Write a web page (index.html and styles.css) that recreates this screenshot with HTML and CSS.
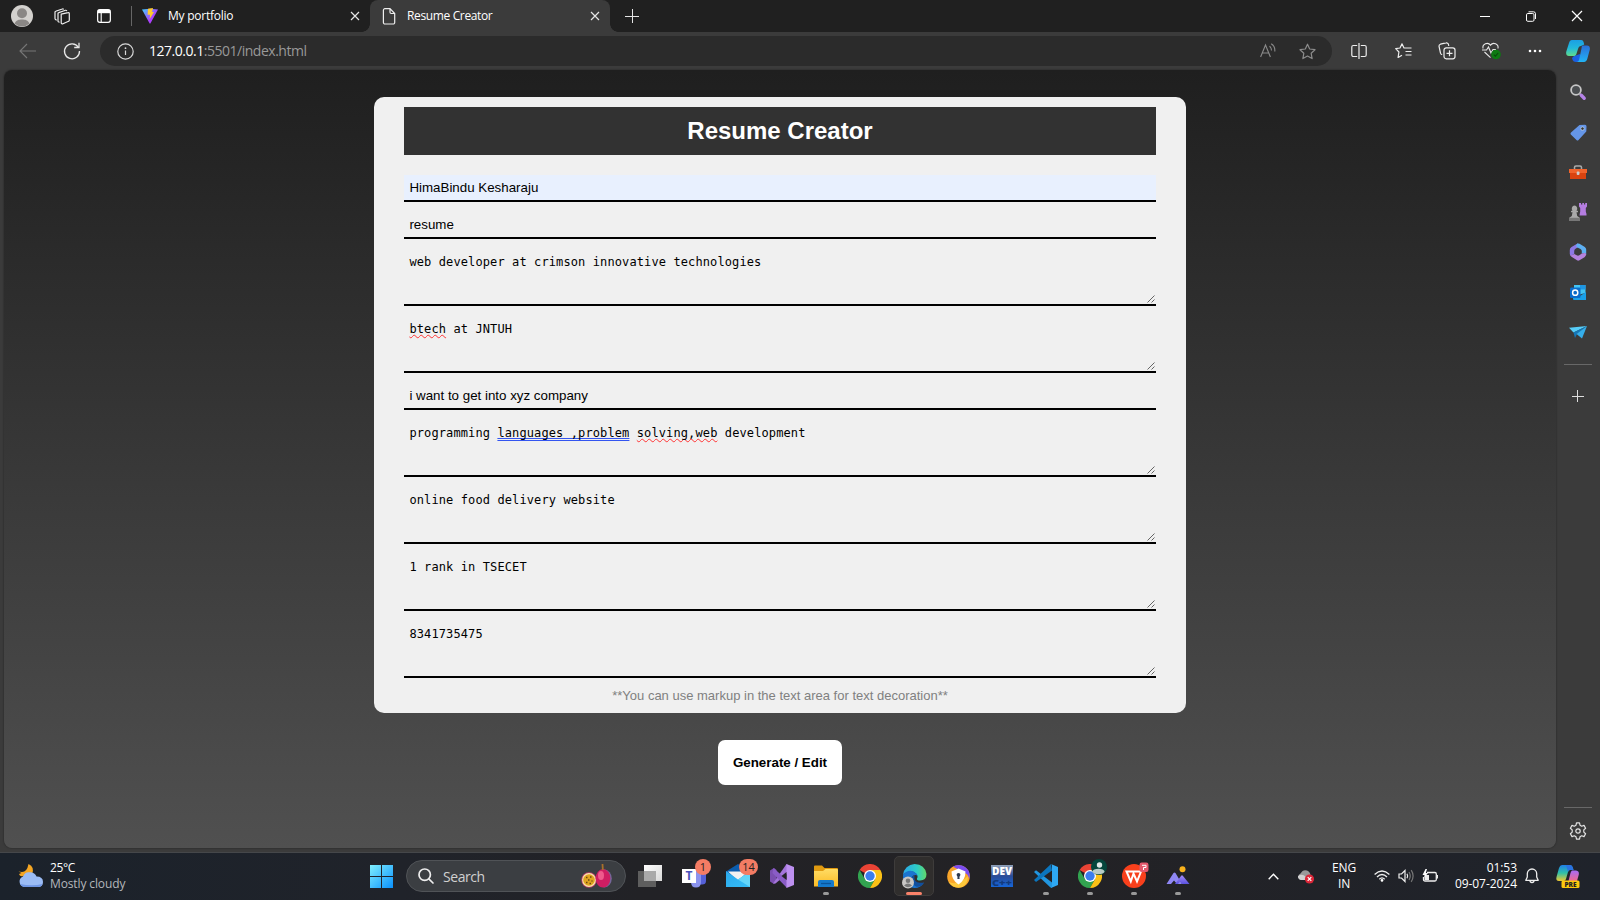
FILE: index.html
```html
<!DOCTYPE html>
<html lang="en">
<head>
<meta charset="utf-8">
<title>Resume Creator</title>
<link rel="stylesheet" href="styles.css">
</head>
<body>
<svg class="defs" width="0" height="0" aria-hidden="true">
  <defs>
    <linearGradient id="gCopA" x1="0" y1="0" x2="0" y2="1"><stop offset="0" stop-color="#1b9fe4"/><stop offset=".5" stop-color="#22b8dc"/><stop offset="1" stop-color="#5fdc8a"/></linearGradient>
    <linearGradient id="gCopB" x1="0" y1="0" x2="0" y2="1"><stop offset="0" stop-color="#2a6fd8"/><stop offset="1" stop-color="#22b4f4"/></linearGradient>
    <linearGradient id="gWin" x1="0" y1="0" x2="1" y2="1"><stop offset="0" stop-color="#80f0ff"/><stop offset="1" stop-color="#0a90fb"/></linearGradient>
    <linearGradient id="gVite" x1="0" y1="0" x2="1" y2="1"><stop offset="0" stop-color="#41d1ff"/><stop offset=".6" stop-color="#a844fe"/><stop offset="1" stop-color="#bd34fe"/></linearGradient>
    <linearGradient id="gEdge" x1="0" y1="0" x2="1" y2="0"><stop offset="0" stop-color="#2aa6e8"/><stop offset=".6" stop-color="#2ecdc4"/><stop offset="1" stop-color="#62d96a"/></linearGradient>
    <linearGradient id="gMail" x1="0" y1="0" x2="1" y2="1"><stop offset="0" stop-color="#2ba8ec"/><stop offset="1" stop-color="#35bdf5"/></linearGradient>
    <linearGradient id="gFolder" x1="0" y1="0" x2="0" y2="1"><stop offset="0" stop-color="#ffdc64"/><stop offset="1" stop-color="#fbbb25"/></linearGradient>
    <linearGradient id="gDev" x1="0" y1="0" x2="0" y2="1"><stop offset="0" stop-color="#8fa0b8"/><stop offset=".5" stop-color="#2b4c96"/><stop offset="1" stop-color="#1565d8"/></linearGradient>
    <linearGradient id="gMtn" x1="0" y1="0" x2="0" y2="1"><stop offset="0" stop-color="#a58af8"/><stop offset="1" stop-color="#5a52e0"/></linearGradient>
    <linearGradient id="gPre" x1="0" y1="0" x2="0" y2="1"><stop offset="0" stop-color="#1f7fe8"/><stop offset=".5" stop-color="#2fc0a8"/><stop offset="1" stop-color="#f0c830"/></linearGradient>
    <linearGradient id="gPreB" x1="0" y1="0" x2="0" y2="1"><stop offset="0" stop-color="#a66bf5"/><stop offset="1" stop-color="#f2688c"/></linearGradient>
    <linearGradient id="gTask" x1="0" y1="0" x2="1" y2="1"><stop offset="0" stop-color="#fff"/><stop offset="1" stop-color="#d8d8d8"/></linearGradient>
    <symbol id="chrome" viewBox="0 0 24 24">
      <path d="M12 12 1.600 6A12 12 0 0 1 22.400 6Z" fill="#e94335"/>
      <path d="M1.600 6A12 12 0 0 0 12 24L17.200 15 12 12 6.800 15Z" fill="#32a350"/>
      <path d="M12 6H22.400A12 12 0 0 1 12 24L17.200 15Z" fill="#fbc116"/>
      <circle cx="12" cy="12" r="6" fill="#fff"/><circle cx="12" cy="12" r="4.700" fill="#3b7ded"/>
    </symbol>
    <symbol id="close" viewBox="0 0 10 10"><path d="M1 1 9 9M9 1 1 9" stroke="#e6e6e6" stroke-width="1.200" fill="none"/></symbol>
    <symbol id="copilot" viewBox="0 0 24 22">
      <path d="M8 16 6 18C6.600 21 8 22 10 22H17L14 14Z" fill="#1b5fe0"/>
      <path d="M6 0H15C17 0 17.600 1.400 18.200 4.600L15 6C13.400 6 12.600 7 12 9L10.400 14C9.800 15.600 9 16 7.400 16H3C.6 16-.3 14 .3 11.600L3 3C3.600 1 4.400 0 6 0Z" fill="url(#gCopA)"/>
      <path d="M16.600 5.600H21C23.400 5.600 24.300 7.600 23.700 10L21.400 18.600C20.800 21 19.800 22 18 22H10.400C12 22 12.800 21 13.200 19.200L15.400 9C15.800 7.200 15.600 6 16.600 5.600Z" fill="url(#gCopB)"/>
    </symbol>
    <symbol id="grip" viewBox="0 0 8 8"><path d="M.5 7.500 7.500 .5M4.500 7.500 7.500 4.500" stroke="#555" stroke-width=".9" fill="none"/></symbol>
  </defs>
</svg>

<header class="tabs">
  <span class="cell avatar"><svg width="22" height="22" viewBox="0 0 22 22"><circle cx="11" cy="11" r="11" fill="#d3d1ce"/><circle cx="11" cy="8.300" r="5" fill="#8a8785"/><path d="M3.500 18.500C5 15 8 14.400 11 14.400S17 15 18.500 18.500A11 11 0 0 1 3.500 18.500Z" fill="#8a8785"/></svg></span>
  <span class="cell spaces"><svg width="17" height="17" viewBox="0 0 17 17" fill="none" stroke="#eee" stroke-width="1.200"><path d="M7.200 6.200 14 4.600a1 1 0 0 1 1.300 1V12.300a1 1 0 0 1-.8 1L9 15.800a1.200 1.200 0 0 1-1.800-1Z"/><path d="M5.600 14.300 4.700 14A1 1 0 0 1 4 13V5.600a1 1 0 0 1 .8-1L11.500 2.300a1 1 0 0 1 1.300.8"/><path d="M2.700 12.200 1.500 11.500A1 1 0 0 1 1 10.600V4.300a1 1 0 0 1 .7-1L8.300 1a1 1 0 0 1 1.300.5"/></svg></span>
  <span class="cell actions"><svg width="14" height="14" viewBox="0 0 15 15"><rect x=".7" y=".7" width="13.600" height="13.600" rx="2.400" fill="none" stroke="#fff" stroke-width="1.300"/><path d="M1 1H14V4.500H1Z" fill="#fff"/><path d="M4.500 4V14" stroke="#fff" stroke-width="1.200"/></svg></span>
  <i class="tab-rule"></i>
  <div class="tab">
    <svg width="16" height="16" viewBox="0 0 16 16"><path d="M0 1.600 8 .8 16 1.600 8.500 15.300Q8 16 7.500 15.300Z" fill="url(#gVite)"/><path d="M6 .8 11 0 10 4H12L7.700 11 8 6.800H5.600Z" fill="#ffc92e"/></svg>
    <span class="tab-name t1">My portfolio</span>
    <svg width="10" height="10"><use href="#close"/></svg>
  </div>
  <div class="tab active">
    <svg width="14" height="17" viewBox="0 0 14 17" fill="none" stroke="#eee" stroke-width="1.200"><path d="M3 .7H8L12.700 5.500V14.500A1.500 1.500 0 0 1 11.200 16H3A1.500 1.500 0 0 1 1.400 14.500V2.200A1.500 1.500 0 0 1 3 .7ZM8 .9V4.300A1.200 1.200 0 0 0 9.200 5.500H12.600"/></svg>
    <span class="tab-name t2">Resume Creator</span>
    <svg width="10" height="10"><use href="#close"/></svg>
  </div>
  <svg class="newtab" width="14" height="14" viewBox="0 0 14 14"><path d="M7.500 0V14M0 7.500H14" stroke="#e4e4e4"/></svg>
  <div class="winctl">
    <svg width="10" height="10" viewBox="0 0 10 10"><path d="M0 5.500H10" stroke="#fff"/></svg>
    <svg width="10" height="11" viewBox="0 0 10 11" fill="none" stroke="#fff"><rect x=".5" y="2.500" width="7.500" height="7.800" rx="1.300"/><path d="M2.500 .8H7.500A2 2 0 0 1 9.500 2.800V8"/></svg>
    <svg width="10" height="10" viewBox="0 0 10 10"><path d="M0 0 10 10M10 0 0 10" stroke="#fff" stroke-width="1.200"/></svg>
  </div>
</header>

<nav class="toolbar">
  <span class="cell"><svg width="18" height="14" viewBox="0 0 18 14"><path d="M8 0 1 7 8 14M1 7H17" stroke="#777" stroke-width="1.100" fill="none"/></svg></span>
  <span class="cell reload"><svg width="18" height="18" viewBox="0 0 18 18" fill="none" stroke="#e8e8e8" stroke-width="1.300"><path d="M15.400 5.400A7.500 7.500 0 1 0 16.500 9"/><path d="M16 .8V5.500H11.200"/></svg></span>
  <div class="address">
    <svg width="17" height="17" viewBox="0 0 17 17"><circle cx="8.500" cy="8.500" r="7.700" fill="none" stroke="#d8d8d8" stroke-width="1.200"/><path d="M8.500 7.500V12" stroke="#d8d8d8" stroke-width="1.200"/><circle cx="8.500" cy="5.200" r=".9" fill="#d8d8d8"/></svg>
    <span class="url"><b>127.0.0.1</b>:5501/index.html</span>
    <svg class="read" width="16" height="16" viewBox="0 0 16 16" fill="none" stroke="#8a8a8a" stroke-width="1.100"><path d="M.6 14 5.500 2 10.400 14M2.300 10H8.700"/><path d="M9.500 3.200Q11.500 4.500 11.500 7.500M11.200 .8Q15.300 3.200 14.800 8.500"/></svg>
    <svg width="17" height="17" viewBox="0 0 17 17" fill="none" stroke="#8c8c8c" stroke-width="1.200" stroke-linejoin="round"><path d="M8.500 1.200 10.700 6 16 6.700 12.200 10.300 13.100 15.600 8.500 13 3.900 15.600 4.800 10.300 1 6.700 6.300 6Z"/></svg>
  </div>
  <div class="tools">
    <span class="cell"><svg width="16" height="16" viewBox="0 0 16 16" fill="none" stroke="#eee" stroke-width="1.200"><path d="M6.200 2.500H2.300A1.500 1.500 0 0 0 .8 4V12A1.500 1.500 0 0 0 2.300 13.500H6.200M9.800 2.500H13.700A1.500 1.500 0 0 1 15.200 4V12A1.500 1.500 0 0 1 13.700 13.500H9.800M8 0V16"/></svg></span>
    <span class="cell"><svg width="17" height="16" viewBox="0 0 17 16" fill="none" stroke="#eee" stroke-width="1.200" stroke-linejoin="round"><path d="M10 5 9 5 7 .8 5 5 .7 5.700 3.900 9 3.100 14.500 7 12.300M9 5 16.500 5M10.500 8.500H16.500M10.500 12H16.500"/></svg></span>
    <span class="cell"><svg width="18" height="18" viewBox="0 0 18 18" fill="none" stroke="#eee" stroke-width="1.200"><rect x="6" y="5.800" width="11" height="11" rx="2.200"/><path d="M11.500 8.300V14.300M8.500 11.300H14.500M4.200 12.500 3.700 12.500A2 2 0 0 1 2.500 11L1 4.200A2 2 0 0 1 2.400 2.200L8 .9A2 2 0 0 1 10.500 2.500L10.800 4"/></svg></span>
    <span class="cell"><svg width="19" height="18" viewBox="0 0 19 18" fill="none" stroke="#e8e8e8" stroke-width="1.100"><path d="M1 6.500A4.200 4.200 0 0 1 8.500 3.200 4.200 4.200 0 0 1 16 6.500M2.500 10 8.500 15.600M0 8H4.500L6.500 5 9 11 11 7.500H14"/><circle cx="14" cy="12.500" r="4.800" fill="#0e7a12" stroke="none"/><path d="M11.800 12.700 13.400 14.200 16.200 11" stroke="#0a4a0c"/></svg></span>
    <span class="cell"><svg width="14" height="4" viewBox="0 0 14 4" fill="#fff"><circle cx="2" cy="2" r="1.300"/><circle cx="7" cy="2" r="1.300"/><circle cx="12" cy="2" r="1.300"/></svg></span>
  </div>
  <span class="cop"><svg width="24" height="22"><use href="#copilot"/></svg></span>
</nav>

<div class="middle">
  <main class="page">
    <section class="card">
      <h1>Resume Creator</h1>
      <div class="field filled">HimaBindu Kesharaju</div>
      <div class="field">resume</div>
      <div class="area"><span>web developer at crimson innovative technologies</span><svg class="grip"><use href="#grip"/></svg></div>
      <div class="area"><span><u class="spell">btech</u> at JNTUH</span><svg class="grip"><use href="#grip"/></svg></div>
      <div class="field">i want to get into xyz company</div>
      <div class="area"><span>programming <u class="grammar">languages ,problem</u> <u class="spell">solving,web</u> development</span><svg class="grip"><use href="#grip"/></svg></div>
      <div class="area"><span>online food delivery website</span><svg class="grip"><use href="#grip"/></svg></div>
      <div class="area"><span>1 rank in TSECET</span><svg class="grip"><use href="#grip"/></svg></div>
      <div class="area"><span>8341735475</span><svg class="grip"><use href="#grip"/></svg></div>
      <p class="note">**You can use markup in the text area for text decoration**</p>
    </section>
    <button class="generate">Generate / Edit</button>
  </main>
  <aside class="sidebar">
    <span class="side"><svg width="16" height="17" viewBox="0 0 16 17"><circle cx="6" cy="6" r="4.900" fill="#4a4d50" stroke="#c6c6c6" stroke-width="1.800"/><path d="M9.500 9.500 11.500 11.500" stroke="#aaa" stroke-width="1.800"/><path d="M11.300 11.300 14.200 14.200" stroke="#b583e8" stroke-width="3.400" stroke-linecap="round"/></svg></span>
    <span class="side"><svg width="17" height="17" viewBox="0 0 17 17"><path d="M9.500 1 15 .8Q16.500 1 16.500 2.500L16.300 7.500 8.500 16Q7.500 17 6.500 16L.8 10.500Q0 9.500 1 8.500Z" fill="#6596e8"/><circle cx="12.500" cy="4.600" r="1.700" fill="#333" stroke="#cde" stroke-width=".7"/></svg></span>
    <span class="side"><svg width="18" height="15" viewBox="0 0 18 15"><path d="M5.500 4.500V2.200Q5.500 1 7 1H11Q12.500 1 12.500 2.200V4.500" fill="none" stroke="#aaa" stroke-width="1.500"/><path d="M0 4H18V8H0Z" fill="#f0632b"/><path d="M1 8H17V14H1Z" fill="#d9430f"/><rect x="7.700" y="6.500" width="2.800" height="3.500" rx="1" fill="#ccc"/></svg></span>
    <span class="side"><svg width="18" height="18" viewBox="0 0 18 18"><path d="M10 0H12V1.500H13.300V0H15V1.500H16.200V0H18V3.500L16.800 5V8.500L17.500 11V12.500H10.500L11.200 8.500V5L10 3.500Z" fill="#b47de0"/><path d="M5.500 2.500A3 3 0 0 1 7.500 7.500L9 8V9.200H7.500L8.200 13 11 15V18H0V15L2.800 13 3.500 9.200H2V8L3.500 7.500A3 3 0 0 1 5.500 2.500Z" fill="#a9a9a9"/><path d="M0 14.800H11V18H0Z" fill="#777"/></svg></span>
    <span class="side"><svg width="18" height="18" viewBox="0 0 18 18"><path d="M9 .3 2.500 4Q.8 5 .8 7V11Q.8 12.500 2.500 12.500L5.200 11V8Q5.200 6.500 6.500 5.700L9.500 4Z" fill="#8d78e4"/><path d="M8 .8Q9 0 10.500 .8L15.800 4Q17.200 5 17.200 6.500V11.500Q16.500 9.500 12.800 10.500V8Q12.800 6.800 11.500 6L7.500 4Q6.500 3 8 .8Z" fill="#5eb0f2"/><path d="M1 11.500Q1.500 13 2.500 13.800L8 17.300Q9 18 10.500 17.300L15.500 14.300Q17.200 13 17.200 11 16.800 9.500 12.800 10.500L10.300 12.300Q9 13.100 7.700 12.300L5.200 11Q3 13 1 11.500Z" fill="#b483de"/></svg></span>
    <span class="side"><svg width="17" height="17" viewBox="0 0 17 17"><path d="M4 1H15.500V9L4 12Z" fill="#42c4f4"/><path d="M10 1H15.500V5.500H10Z" fill="#1e96e2"/><path d="M3 9 10 12 16 8V16H4Q3 16 3 15Z" fill="#1aa0e8"/><rect x="0" y="3.500" width="10.500" height="10.500" rx="1.200" fill="#0a6cca"/><circle cx="5.200" cy="8.700" r="2.600" fill="none" stroke="#fff" stroke-width="1.500"/></svg></span>
    <span class="side"><svg width="18" height="13" viewBox="0 0 18 13"><path d="M18 0 0 1.800 4.500 6.500Z" fill="#57cdf8"/><path d="M18 0 4.500 6.500 6 12 8 8Z" fill="#1477b8"/><path d="M18 0 7.500 8 13 12.500Z" fill="#35aeea"/></svg></span>
    <i class="side-rule"></i>
    <svg class="side-plus" width="12" height="12" viewBox="0 0 12 12"><path d="M5.500 0V12M0 6.500H12" stroke="#ddd"/></svg>
    <i class="side-rule bottom"></i>
    <svg class="gear" width="18" height="18" viewBox="0 0 18 18" fill="none" stroke="#e4e4e4" stroke-width="1.200" stroke-linejoin="round"><path d="M7.500 .8H10.500L11 3.200 12.700 4.200 15 3.400 16.600 6.200 14.800 7.900V10.100L16.600 11.800 15 14.600 12.700 13.800 11 14.800 10.500 17.200H7.500L7 14.800 5.300 13.800 3 14.600 1.400 11.800 3.200 10.100V7.900L1.400 6.200 3 3.400 5.300 4.200 7 3.200Z"/><circle cx="9" cy="9" r="2.200"/></svg>
  </aside>
</div>

<footer class="taskbar">
  <div class="weather">
    <svg width="26" height="26" viewBox="0 0 26 26"><path d="M10.500 1Q17 4 14 11L5 13Q2 14 1 11L3.500 10 .5 8.500 4 9Q9 9 10.500 1Z" fill="#f5a623"/><path d="M6 24A5.500 5.500 0 0 1 5 13.500Q7 8.500 12 9.300 17 9.500 18.500 13.500 25 13.500 25 19 25 24 20 24Z" fill="#9bbcf5"/><path d="M2 21Q3.500 24 6 24H20Q23.500 24 24.500 21Q14 23.500 2 21Z" fill="#6f96e4"/></svg>
    <div class="weather-text"><span class="temp">25°C</span><span class="sky">Mostly cloudy</span></div>
  </div>
  <svg class="start" width="23" height="23" viewBox="0 0 23 23"><path d="M0 0H11V11H0ZM12 0H23V11H12ZM0 12H11V23H0ZM12 12H23V23H12Z" fill="url(#gWin)"/></svg>
  <div class="search">
    <svg width="16" height="16" viewBox="0 0 16 16" fill="none" stroke="#eee" stroke-width="1.700"><circle cx="6.700" cy="6.700" r="5.700"/><path d="M10.800 10.800 15 15" stroke-linecap="round"/></svg>
    <span>Search</span>
    <svg width="31" height="25" viewBox="0 0 31 25"><circle cx="8" cy="16" r="7.700" fill="#c33d68"/><circle cx="8" cy="16" r="6.900" fill="#f8e6b0"/><circle cx="8" cy="16" r="5.800" fill="#e0a420"/><path d="M5 13.500h1.500M9 13h1.500M7 16h1.500M10.500 17h1M5 18.500h1.500M8.500 19.500H10" stroke="#6c4810" stroke-width="1.500"/><ellipse cx="23.500" cy="14.500" rx="7.300" ry="9" fill="#77669a"/><ellipse cx="22" cy="14.300" rx="7.300" ry="9.300" fill="#cf1e63"/><ellipse cx="20" cy="11.500" rx="3" ry="4.500" fill="#ef5a8c"/><path d="M21.500 0 21.800 6" stroke="#a8702a" stroke-width="1.800"/></svg>
  </div>
  <div class="apps">
    <span class="app"><svg width="24" height="22" viewBox="0 0 24 22"><path d="M6 0H24V16H6Z" fill="url(#gTask)"/><path d="M0 6H18V22H0Z" fill="#5e5e5e"/><path d="M6 6H18V16H6Z" fill="#a9a9a9"/></svg></span>
    <span class="app"><svg width="24" height="24" viewBox="0 0 24 24"><path d="M13 7H24V17Q24 20.500 20 20.500H13Z" fill="#5560d8"/><path d="M9 6H19V18Q19 23.500 14 23.500 9 23.500 9 18Z" fill="#8b93ee"/><rect x="0" y="5" width="14" height="14" fill="#fff"/><text x="7" y="16.300" class="ico-t">T</text></svg><em class="badge">1</em></span>
    <span class="app"><svg width="24" height="24" viewBox="0 0 24 24"><path d="M0 7.500 12 0 24 7.500V16H0Z" fill="#0b5cad"/><path d="M2 7.500H22L12 17Z" fill="#f2f2f2"/><path d="M0 7 12 15.500 24 7.500V23H0Z" fill="url(#gMail)"/><path d="M24 23 12 15.500 24 7.500Z" fill="#63d5f8"/></svg><em class="badge wide">14</em></span>
    <span class="app"><svg width="24" height="24" viewBox="0 0 24 24"><path d="M0 6.500 4 4 6.500 6V18L4 20 0 17.500Z" fill="#7b4fb0"/><path d="M3 19.500 16.500 0 19 2.500V8L5.500 19.500Z" fill="#a374da"/><path d="M3.500 4 17 16V24L2.500 9Z" fill="#8a5cc6"/><path d="M16.500 0 24 3V21L16.500 24Z" fill="#bd90f0"/><path d="M16.500 8V16L11.500 12Z" fill="#232327"/></svg></span>
    <span class="app"><svg width="24" height="22" viewBox="0 0 24 22"><path d="M0 1.500Q0 .5 1 .5H8L10.500 3H23Q24 3 24 4V9H0Z" fill="#e09a10"/><path d="M0 6H9L11.500 4H23Q24 4 24 5V21.500H0Z" fill="url(#gFolder)"/><path d="M4 22V17Q4 15 6 15H18Q20 15 20 17V22Z" fill="#1479cc"/><path d="M7 18.500H17" stroke="#0a559c" stroke-width="1.300"/></svg><i class="dot"></i></span>
    <span class="app"><svg width="24" height="24"><use href="#chrome"/></svg></span>
    <span class="app current"><svg width="25" height="24" viewBox="0 0 25 24"><path d="M1 11A12 12 0 0 1 12.500 0Q23 .5 24.500 10 24.500 16.500 18 16.500 14.500 16.500 15 14.500 16.500 12 14 9.500 8 4.500 1 11Z" fill="url(#gEdge)"/><path d="M1 11Q5 6 10 7 14.500 8.500 15.500 11.500 11 10 9.500 14 9 21 16 20.500 19 20.500 22 18.500 18.500 24 12.500 24 .5 23 1 11Z" fill="#1a74d0"/><path d="M9.500 14Q10 11.500 12.500 11.500 11.500 18.500 18 18.800 21 19 22 18.500 19 23.500 14.500 22.700 9 20 9.500 14Z" fill="#104f9e"/><circle cx="6" cy="18.500" r="6" fill="#c9c7c5"/><circle cx="6" cy="16.800" r="2.300" fill="#777"/><path d="M2 21.500Q6 17.500 10 21.500 6 25 2 21.500Z" fill="#777"/></svg><i class="dot"></i></span>
    <span class="app"><svg width="23" height="23" viewBox="0 0 23 23"><circle cx="11.500" cy="11.500" r="11.300" fill="#f9a52a"/><path d="M6 1.500A11.300 11.300 0 0 1 22.500 14Q20 5 6 1.500Z" fill="#7c4df0"/><path d="M6 1.500Q16 1 20 9L12 5Z" fill="#7c4df0"/><path d="M1.500 17Q11 21 21 11 21 22 11.500 22.700 5 22.500 1.500 17Z" fill="#fcc93c"/><path d="M11.500 3.500 18.500 6.500Q18.500 15 11.500 19.500 4.500 15 4.500 6.500Z" fill="#fff"/><circle cx="11.500" cy="9.800" r="1.900" fill="#2b3850"/><path d="M10.700 10H12.300L12.600 14H10.400Z" fill="#2b3850"/></svg></span>
    <span class="app"><svg width="22" height="22" viewBox="0 0 22 22"><rect width="22" height="22" fill="url(#gDev)"/><text x="11" y="10.300" class="ico-dev" textLength="20" lengthAdjust="spacingAndGlyphs">DEV</text><text x="11" y="21" class="ico-cpp" textLength="20" lengthAdjust="spacingAndGlyphs">C++</text></svg></span>
    <span class="app"><svg width="24" height="24" viewBox="0 0 24 24"><path d="M0 8 2 6.300 18 18.500V24L16.500 23.500Z" fill="#2196e0"/><path d="M0 16 17 0 18 6.500 2 18Z" fill="#0b75bd"/><path d="M17 0 24 3V21L17 24Q18 23.500 18 22V2Q18 .5 17 0Z" fill="#2ea8f4"/></svg><i class="dot"></i></span>
    <span class="app"><svg width="24" height="24"><use href="#chrome"/></svg><svg class="profile" width="16" height="16" viewBox="0 0 16 16"><circle cx="8" cy="8" r="8" fill="#06463c"/><circle cx="8.500" cy="6" r="2.700" fill="#dfe8e6"/><ellipse cx="7.500" cy="12.500" rx="6" ry="2.800" fill="#b8cbc7"/></svg><i class="dot"></i></span>
    <span class="app"><svg width="24" height="24" viewBox="0 0 24 24"><circle cx="12" cy="12" r="12" fill="#f8401c"/><path d="M4.500 7.500H19L15 17.500 11.500 9.500 8.800 17.500Z" fill="none" stroke="#fff" stroke-width="2"/><rect x="17.500" y="-1.500" width="9" height="9.500" rx="2.200" fill="#e4586c"/><path d="M20 1.300H24V3.500H21.500V6" fill="none" stroke="#fff" stroke-width="1"/></svg><i class="dot"></i></span>
    <span class="app"><svg width="24" height="20" viewBox="0 0 24 20"><circle cx="16.500" cy="3.300" r="3" fill="#f9b21c"/><path d="M.5 18 7.500 7Q8.500 6 9.500 7L16 18H11L8 14.500 5 18Z" fill="#8f87f4"/><path d="M9 18 15 10Q16 8.500 17 10L23.500 18H16L14 15.500 12 18Z" fill="url(#gMtn)"/></svg><i class="dot"></i></span>
  </div>
  <div class="tray">
    <svg class="chev" width="11" height="7" viewBox="0 0 11 7"><path d="M.7 6.200 5.500 1.200 10.300 6.200" fill="none" stroke="#fff" stroke-width="1.400"/></svg>
    <svg class="cloud" width="18" height="15" viewBox="0 0 18 15"><path d="M4 11A3.500 3.500 0 0 1 3.500 4.500Q6 0 10 1.500 13 2.500 13.500 6L9 11Z" fill="#999"/><path d="M4 11Q.5 10 1 7 5 4 9 8V11Z" fill="#d0d0d0"/><circle cx="12.500" cy="10" r="4.600" fill="#dc2638"/><path d="M10.700 8.200 14.300 11.800M14.300 8.200 10.700 11.800" stroke="#fff" stroke-width="1.200"/></svg>
    <div class="lang"><span>ENG</span><span>IN</span></div>
    <svg class="wifi" width="16" height="12" viewBox="0 0 16 12" fill="none" stroke="#eee" stroke-width="1.300"><path d="M.6 4.500Q8-2.500 15.400 4.500M3 7Q8 2 13 7M5.300 9.200Q8 6.500 10.700 9.200"/><circle cx="8" cy="10.400" r="1.300" fill="#fff" stroke="none"/></svg>
    <svg class="vol" width="17" height="14" viewBox="0 0 17 14" fill="none" stroke="#eee" stroke-width="1.200"><path d="M1 5H3.500L7 1.500V12.500L3.500 9H1Z"/><path d="M9 4.800Q10.300 7 9 9.200"/><path d="M11 3Q13.500 7 11 11M13.200 1.200Q17 7 13.200 12.800" stroke="#777"/></svg>
    <svg class="bat" width="17" height="14" viewBox="0 0 17 14"><path d="M5 3.500H13Q14.300 3.500 14.300 5V10.500Q14.300 12 13 12H3Q1.500 12 1.500 10.500V8" fill="none" stroke="#eee" stroke-width="1.300"/><path d="M14.500 6H16V9.500H14.500Z" fill="#eee"/><path d="M2.500 6H7V11H2.500Z" fill="#eee"/><path d="M3.500 0 .5 6H3L2 9 6 4H3.800L5 0Z" fill="#fff"/></svg>
    <div class="clock"><span class="time">01:53</span><span class="date">09-07-2024</span></div>
    <svg class="bell" width="14" height="16" viewBox="0 0 14 16" fill="none" stroke="#eee" stroke-width="1.300" stroke-linejoin="round"><path d="M7 1A4.700 4.700 0 0 0 2.300 5.700V9L.8 12.300H13.200L11.700 9V5.700A4.700 4.700 0 0 0 7 1ZM5 12.500A2 2 0 0 0 9 12.500"/></svg>
    <svg class="pre" width="24" height="23" viewBox="0 0 24 23"><path d="M6 0H14Q16.500 0 17.500 5H14Q12.500 5 12 7L10 14Q9.500 16 7.500 16H3Q-.5 16 .5 12L3 3Q4 0 6 0Z" fill="url(#gPre)"/><path d="M10 0H14Q16.500 0 17.500 5H14Q12.500 5 12 7Z" fill="#2a72e0"/><path d="M16 5.500H20Q23.500 6 22.800 9.500L21 16H12.500L14.500 8Q15 6 16 5.500Z" fill="url(#gPreB)"/><rect x="5.500" y="15.500" width="18" height="7.500" rx="1.500" fill="#fcc80e"/><text x="14.500" y="21.700" class="ico-pre">PRE</text></svg>
  </div>
</footer>
</body>
</html>
```
FILE: styles.css
```css
* { box-sizing: border-box; }
html, body { margin: 0; height: 900px; overflow: hidden; }
body {
  display: flex; flex-direction: column; width: 1600px;
  background: #3b3b3b; color: #fff;
  font-family: "Open Sans", "Noto Sans", sans-serif; font-size: 12px;
}
svg { display: block; flex: none; overflow: visible; }
.defs { position: absolute; }
.cell { display: flex; align-items: center; justify-content: center; width: 44px; height: 100%; flex: none; }

/* Tab strip */
.tabs { display: flex; align-items: center; height: 32px; flex: none; background: #202020; }
.avatar { width: 44px; }
.spaces { width: 37px; }
.actions { width: 46px; }
.tab-rule { width: 1px; height: 20px; margin-left: 4px; background: #666; }
.tab { display: flex; align-items: center; width: 238px; height: 32px; padding: 0 10px 0 10px; flex: none; }
.tab-name { flex: 1; margin-left: 10px; line-height: 16px; white-space: nowrap; }
.t1 { letter-spacing: -.25px; }
.t2 { letter-spacing: -.36px; }
.tab.active { position: relative; width: 240px; padding-left: 12px; background: #3b3b3b; border-radius: 8px 8px 0 0; }
.tab.active .tab-name { margin-left: 11px; }
.tab.active::before, .tab.active::after { content: ""; position: absolute; bottom: 0; width: 8px; height: 8px; }
.tab.active::before { left: -8px; background: radial-gradient(circle at 0 0, transparent 7.5px, #3b3b3b 8px); }
.tab.active::after { right: -8px; background: radial-gradient(circle at 100% 0, transparent 7.5px, #3b3b3b 8px); }
.newtab { margin-left: 15px; }
.winctl { display: flex; align-items: center; gap: 36px; margin-left: auto; margin-right: 18px; }

/* Toolbar */
.toolbar { display: flex; align-items: center; height: 38px; flex: none; padding-left: 6px; }
.toolbar .reload { width: 44px; }
.address { display: flex; align-items: center; width: 1232px; height: 30px; margin-left: 6px; padding: 0 16px 0 17px; border-radius: 15px; background: #2b2b2b; }
.url { flex: 1; margin-left: 15px; font-size: 14px; color: #999; letter-spacing: -.48px; line-height: 20px; }
.url b { color: #fff; font-weight: 400; }
.read { margin-right: 23px; }
.tools { display: flex; margin-left: 5px; height: 100%; }
.cop { margin-left: 9px; }

/* Page */
.middle { display: flex; height: 778px; flex: none; padding-left: 4px; }
.page {
  width: 1552px; padding-top: 27px; border-radius: 8px;
  display: flex; flex-direction: column; align-items: center;
  background: linear-gradient(#1f1f1f, #505050);
  box-shadow: 0 0 2px rgba(0,0,0,.5);
  font-family: "Liberation Sans", Arial, sans-serif; color: #000;
}
.card { display: flex; flex-direction: column; gap: 10px; width: 812px; padding: 10px 30px; border-radius: 10px; background: #f0f0f0; }
.card h1 { margin: 0 0 10px; height: 48px; line-height: 47px; text-align: center; font-size: 24px; font-weight: 700; color: #fff; background: #323232; }
.field { height: 27px; padding: 5px 5px 5px 5.4px; border-bottom: 2px solid #000; font-size: 13.333px; line-height: 15px; }
.filled { background: #e8f0fe; }
.area {
  display: flex; justify-content: space-between; height: 57px; padding: 5px 1px 1px 5.4px; border-bottom: 2px solid #000;
  font-family: "DejaVu Sans Mono", monospace; font-size: 12px; letter-spacing: .11px; line-height: 16px; white-space: pre;
}
.grip { width: 8px; height: 8px; align-self: flex-end; }
.spell { text-decoration: underline wavy #f33 1px; text-underline-offset: 1px; text-decoration-skip-ink: none; }
.grammar { text-decoration: underline double #3355f0 1px; text-underline-offset: 1px; text-decoration-skip-ink: none; }
.note { margin: 0; text-align: center; font-size: 13px; line-height: 15px; color: #808080; }
.generate { width: 124px; height: 45px; margin-top: 27px; padding: 0; border: 0; border-radius: 7px; background: #fff; color: #000; font: 700 13.333px "Liberation Sans", Arial, sans-serif; }

/* Sidebar */
.sidebar { display: flex; flex-direction: column; align-items: center; width: 44px; padding-top: 2px; }
.side { display: flex; align-items: center; justify-content: center; height: 40.1px; flex: none; }
.side-rule { width: 28px; height: 1px; margin-top: 11px; background: #686868; flex: none; }
.side-plus { margin-top: 25px; }
.side-rule.bottom { margin-top: auto; }
.gear { margin: 14px 0 8px; }

/* Taskbar */
.taskbar { display: flex; align-items: center; height: 48px; margin-top: auto; padding-bottom: 1px; border-top: 1px solid #45474a; background: linear-gradient(90deg, #1b222b 0, #20232a 25%, #222226 40%, #232225 65%, #1f232b 100%); }
.weather { display: flex; align-items: center; width: 370px; padding-left: 18px; }
.weather-text { display: flex; flex-direction: column; margin-left: 6px; line-height: 16px; }
.temp { letter-spacing: -.4px; }
.sky { color: #b4b7bb; letter-spacing: -.12px; }
.search { display: flex; align-items: center; width: 220px; height: 32px; margin-left: 13px; padding: 0 13px 0 11px; border: 1px solid #505357; border-radius: 16px; background: #3b3e42; }
.search span { flex: 1; margin-left: 9px; font-size: 14px; letter-spacing: -.45px; color: #d0d0d0; }
.apps { display: flex; margin-left: 2px; }
.app { position: relative; display: flex; align-items: center; justify-content: center; width: 44px; height: 44px; }
.current { width: 40px; height: 40px; margin: 2px; border: 1px solid #3e3c3b; border-radius: 5px; background: #302e2d; }
.dot { position: absolute; left: 19px; bottom: 3px; width: 6px; height: 3px; border-radius: 2px; background: #999; }
.current .dot { left: 11px; bottom: 0; width: 16px; background: #f9826a; }
.badge { position: absolute; left: 23px; top: 5px; width: 16px; height: 16px; border-radius: 8px; background: #f47c64; color: #222; font-style: normal; font-size: 11px; line-height: 16px; text-align: center; }
.badge.wide { width: 19px; }
.profile { position: absolute; left: 23px; top: 5px; }
.ico-t { font: 700 12px "Open Sans", sans-serif; fill: #4b53bc; text-anchor: middle; }
.ico-dev { font: 800 10px/10px "Open Sans", sans-serif; fill: #fff; text-anchor: middle; }
.ico-cpp { font: 800 8px/8px "Open Sans", sans-serif; fill: #123a7c; text-anchor: middle; }
.ico-pre { font: 800 6.5px "Open Sans", sans-serif; fill: #222; text-anchor: middle; }
.tray { display: flex; align-items: center; width: 332px; margin-left: auto; line-height: 16px; }
.cloud { margin-left: 18px; }
.lang { display: flex; flex-direction: column; align-items: center; width: 26px; margin-left: 16px; letter-spacing: -.2px; }
.wifi { margin-left: 17px; }
.vol { margin-left: 8px; }
.bat { margin-left: 7px; }
.clock { display: flex; flex-direction: column; align-items: flex-end; width: 70px; margin-left: 8px; white-space: nowrap; letter-spacing: -.05px; }
.bell { margin-left: 8px; }
.pre { margin-left: 17px; }
```
